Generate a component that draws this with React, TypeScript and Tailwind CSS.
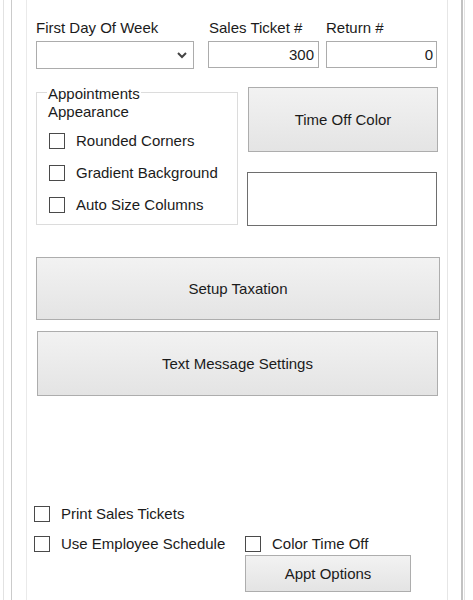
import React from "react";

function Check({ label }: { label: string }) {
  return (
    <div className="flex items-center">
      <div className="h-[16px] w-[16px] shrink-0 border border-[#4a4a4a] bg-white" />
      <span className="ml-[11px] whitespace-nowrap">{label}</span>
    </div>
  );
}

const btn =
  "flex items-center justify-center border border-[#adadad] bg-linear-to-b from-[#f2f2f2] to-[#e4e4e4] text-[#1b1b1b]";

export default function App() {
  return (
    <div className="flex h-[600px] w-[473px] bg-white text-[15px] leading-[18px] text-[#1b1b1b] font-['Liberation_Sans',Arial,sans-serif]">
      <div className="w-[3px]" />
      <div className="w-px bg-[#e2e2e2]" />
      <div className="w-[7px]" />
      <div className="w-px bg-[#cbcbcb]" />
      <div className="w-[14px]" />
      <div className="w-px bg-[#eaeaea]" />

      <main className="flex w-[420px] flex-col pt-[19px]">
        {/* Top row: labels and inputs */}
        <div className="flex pl-[9px]">
          <div className="flex w-[158px] flex-col">
            <span>First Day Of Week</span>
            <div className="mt-[4px] flex h-[28px] items-center justify-end border border-[#acacac] bg-white pr-[6px]">
              <svg width="10" height="7" viewBox="0 0 10 7">
                <path d="M1 1 L5 5 L9 1" fill="none" stroke="#444" strokeWidth="2" />
              </svg>
            </div>
          </div>
          <div className="ml-[14px] flex w-[111px] flex-col">
            <span className="pl-[1px]">Sales Ticket #</span>
            <div className="mt-[4px] flex h-[27px] items-center justify-end border border-[#acacac] bg-white pr-[4px]">
              300
            </div>
          </div>
          <div className="ml-[7px] flex w-[111px] flex-col">
            <span>Return #</span>
            <div className="mt-[4px] flex h-[27px] items-center justify-end border border-[#acacac] bg-white pr-[3px]">
              0
            </div>
          </div>
        </div>

        {/* Group + Time off color */}
        <div className="flex items-start pl-[9px]">
          <div className="relative mt-[23px] h-[133px] w-[202px] border border-[#dcdcdc] pl-[12px] pt-[32px]">
            <div className="absolute left-[10px] top-[-8px] bg-white px-[1px]">
              Appointments
              <br />
              Appearance
            </div>
            <div className="flex h-[32px] items-center">
              <Check label="Rounded Corners" />
            </div>
            <div className="flex h-[32px] items-center">
              <Check label="Gradient Background" />
            </div>
            <div className="flex h-[31px] items-center">
              <Check label="Auto Size Columns" />
            </div>
          </div>
          <div className="ml-[9px] mt-[18px] flex flex-col">
            <div className={`${btn} ml-[1px] h-[65px] w-[190px]`}>Time Off Color</div>
            <div className="mt-[20px] h-[54px] w-[190px] border border-[#6e6e6e] bg-white" />
          </div>
        </div>

        {/* Big buttons */}
        <div className="pl-[9px]">
          <div className={`${btn} mt-[31px] h-[63px] w-[404px]`}>Setup Taxation</div>
          <div className={`${btn} ml-[1px] mt-[11px] h-[65px] w-[401px]`}>Text Message Settings</div>
        </div>

        {/* Bottom options */}
        <div className="mt-[108px] grid grid-cols-[211px_auto] pl-[7px]">
          <div className="flex h-[20px] items-center">
            <Check label="Print Sales Tickets" />
          </div>
          <div />
          <div className="mt-[10px] flex h-[20px] items-center">
            <Check label="Use Employee Schedule" />
          </div>
          <div className="mt-[10px] flex h-[20px] items-center">
            <Check label="Color Time Off" />
          </div>
          <div />
          <div className={`${btn} mt-[1px] h-[37px] w-[166px]`}>Appt Options</div>
        </div>
      </main>

      <div className="w-px bg-[#e6e6e6]" />
      <div className="w-[13px]" />
      <div className="w-[2px] bg-[#c2c2c2]" />
      <div className="w-px" />
      <div className="w-px bg-[#e2e2e2]" />
    </div>
  );
}
